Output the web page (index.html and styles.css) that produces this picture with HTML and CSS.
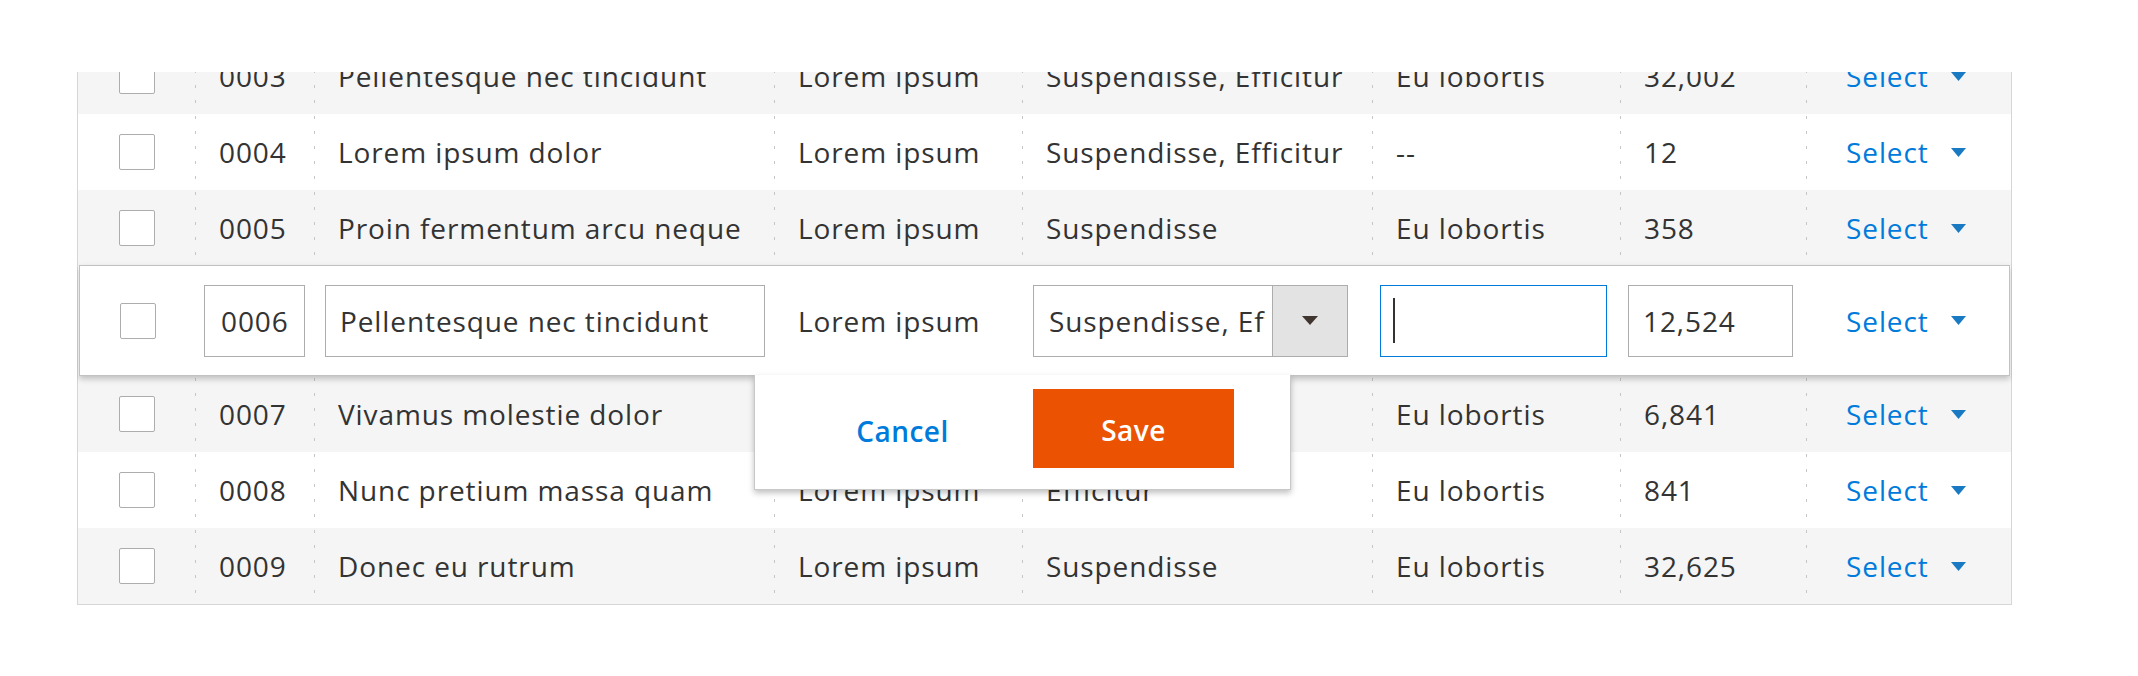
FILE: index.html
```html
<!DOCTYPE html>
<html lang="en">
<head>
<meta charset="utf-8">
<title>Inline edit grid</title>
<link rel="stylesheet" href="styles.css">
</head>
<body>
<div class="page">
  <div class="viewport">
    <div class="grid">
      <div class="row alt">
        <div class="cell check"><span class="checkbox"></span></div>
        <div class="cell">0003</div>
        <div class="cell">Pellentesque nec tincidunt</div>
        <div class="cell">Lorem ipsum</div>
        <div class="cell">Suspendisse, Efficitur</div>
        <div class="cell">Eu lobortis</div>
        <div class="cell">32,002</div>
        <div class="cell action">Select<svg class="tri" viewBox="0 0 15 9" width="15" height="9"><polygon points="0,0 15,0 7.5,9"/></svg></div>
      </div>
      <div class="row">
        <div class="cell check"><span class="checkbox"></span></div>
        <div class="cell">0004</div>
        <div class="cell">Lorem ipsum dolor</div>
        <div class="cell">Lorem ipsum</div>
        <div class="cell">Suspendisse, Efficitur</div>
        <div class="cell">--</div>
        <div class="cell">12</div>
        <div class="cell action">Select<svg class="tri" viewBox="0 0 15 9" width="15" height="9"><polygon points="0,0 15,0 7.5,9"/></svg></div>
      </div>
      <div class="row alt">
        <div class="cell check"><span class="checkbox"></span></div>
        <div class="cell">0005</div>
        <div class="cell">Proin fermentum arcu neque</div>
        <div class="cell">Lorem ipsum</div>
        <div class="cell">Suspendisse</div>
        <div class="cell">Eu lobortis</div>
        <div class="cell">358</div>
        <div class="cell action">Select<svg class="tri" viewBox="0 0 15 9" width="15" height="9"><polygon points="0,0 15,0 7.5,9"/></svg></div>
      </div>
      <div class="row edit">
        <div class="cell check"><span class="checkbox"></span></div>
        <div class="cell field-cell"><input class="field field-id" type="text" value="0006" readonly></div>
        <div class="cell field-cell"><input class="field field-title" type="text" value="Pellentesque nec tincidunt" readonly></div>
        <div class="cell">Lorem ipsum</div>
        <div class="cell field-cell">
          <div class="select">
            <span class="select-value">Suspendisse, Efficitur</span>
            <span class="select-btn"><svg viewBox="0 0 16 9" width="16" height="9"><polygon points="0,0 16,0 8,9"/></svg></span>
          </div>
        </div>
        <div class="cell field-cell"><div class="field field-focus"><span class="caret"></span></div></div>
        <div class="cell field-cell"><input class="field field-num" type="text" value="12,524" readonly></div>
        <div class="cell action">Select<svg class="tri" viewBox="0 0 15 9" width="15" height="9"><polygon points="0,0 15,0 7.5,9"/></svg></div>
        <div class="popup">
          <button class="btn-cancel" type="button">Cancel</button>
          <button class="btn-save" type="button">Save</button>
        </div>
      </div>
      <div class="row alt">
        <div class="cell check"><span class="checkbox"></span></div>
        <div class="cell">0007</div>
        <div class="cell">Vivamus molestie dolor</div>
        <div class="cell">Lorem ipsum</div>
        <div class="cell">Suspendisse</div>
        <div class="cell">Eu lobortis</div>
        <div class="cell">6,841</div>
        <div class="cell action">Select<svg class="tri" viewBox="0 0 15 9" width="15" height="9"><polygon points="0,0 15,0 7.5,9"/></svg></div>
      </div>
      <div class="row">
        <div class="cell check"><span class="checkbox"></span></div>
        <div class="cell">0008</div>
        <div class="cell">Nunc pretium massa quam</div>
        <div class="cell">Lorem ipsum</div>
        <div class="cell">Efficitur</div>
        <div class="cell">Eu lobortis</div>
        <div class="cell">841</div>
        <div class="cell action">Select<svg class="tri" viewBox="0 0 15 9" width="15" height="9"><polygon points="0,0 15,0 7.5,9"/></svg></div>
      </div>
      <div class="row alt">
        <div class="cell check"><span class="checkbox"></span></div>
        <div class="cell">0009</div>
        <div class="cell">Donec eu rutrum</div>
        <div class="cell">Lorem ipsum</div>
        <div class="cell">Suspendisse</div>
        <div class="cell">Eu lobortis</div>
        <div class="cell">32,625</div>
        <div class="cell action">Select<svg class="tri" viewBox="0 0 15 9" width="15" height="9"><polygon points="0,0 15,0 7.5,9"/></svg></div>
      </div>
    </div>
  </div>
</div>
</body>
</html>
```

FILE: styles.css
```css
* {
  box-sizing: border-box;
}

body {
  margin: 0;
  background: #ffffff;
  font-family: "Open Sans", "Noto Sans", sans-serif;
  font-size: 28px;
  letter-spacing: 0.9px;
  color: #333333;
}

.page {
  padding: 72px 0 0 77px;
}

.viewport {
  width: 1935px;
  height: 560px;
  overflow: hidden;
}

.grid {
  margin-top: -34px;
  border: 1px solid #d6d6d6;
  border-top: 0;
  position: relative;
}

.row {
  display: grid;
  grid-template-columns: 117px 119px 460px 248px 350px 248px 186px 1fr;
  height: 76px;
  background: #ffffff;
}

.row.alt {
  background: #f5f5f5;
}

.cell {
  height: 100%;
  display: flex;
  align-items: center;
  padding-left: 24px;
  white-space: nowrap;
  overflow: hidden;
}

.cell + .cell {
  background-image: repeating-linear-gradient(to bottom, #c6c6c6 0, #c6c6c6 3px, transparent 3px, transparent 15px);
  background-size: 1px 100%;
  background-repeat: no-repeat;
  background-position: 0 2px;
}

.cell.check {
  justify-content: center;
  padding: 0;
}

.checkbox {
  display: block;
  width: 36px;
  height: 36px;
  border: 1px solid #adadad;
  border-radius: 2px;
  background: #ffffff;
}

.cell.action {
  padding-left: 40px;
  color: #007bdb;
}

.tri {
  margin-left: 22px;
  fill: #1979c3;
  flex: none;
}

/* editable row */
.row.edit {
  position: relative;
  z-index: 2;
  height: 111px;
  margin: -1px 1px 0 1px;
  border: 1px solid #c2c2c2;
  background: #ffffff;
  box-shadow: 0 3px 6px rgba(0, 0, 0, 0.22);
  grid-template-columns: 115px 119px 460px 248px 350px 248px 186px 1fr;
  overflow: visible;
}

.row.edit .cell {
  background-image: none;
}

.row.edit .field-cell {
  padding-left: 0;
  overflow: visible;
}

.field {
  height: 72px;
  border: 1px solid #adadad;
  background: #ffffff;
  font-family: inherit;
  font-size: 28px;
  letter-spacing: 0.9px;
  color: #333333;
  padding: 0 14px;
  outline: none;
  border-radius: 0;
}

.field-id {
  width: 101px;
  margin-left: 9px;
  padding-left: 16px;
}

.field-title {
  width: 440px;
  margin-left: 11px;
}

.field-num {
  width: 165px;
  margin-left: 8px;
}

.field-focus {
  width: 227px;
  margin-left: 8px;
  border-color: #007bdb;
  display: flex;
  align-items: center;
  padding-left: 12px;
}

.caret {
  display: block;
  width: 2px;
  height: 45px;
  background: #333333;
}

.select {
  width: 315px;
  height: 72px;
  margin-left: 11px;
  border: 1px solid #adadad;
  background: #ffffff;
  display: flex;
}

.select-value {
  flex: 1;
  display: flex;
  align-items: center;
  padding: 0 0 0 15px;
  margin-right: 7px;
  overflow: hidden;
  white-space: nowrap;
}

.select-btn {
  width: 75px;
  flex: none;
  border-left: 1px solid #adadad;
  background: #e3e3e3;
  display: flex;
  align-items: center;
  justify-content: center;
  fill: #41362f;
}

/* actions popup under the editable row */
.popup {
  position: absolute;
  left: 674px;
  top: 100%;
  width: 537px;
  height: 115px;
  background: #ffffff;
  border: 1px solid #c8c8c8;
  border-top: 0;
  box-shadow: 0 3px 6px rgba(0, 0, 0, 0.25);
  display: flex;
  align-items: center;
  padding: 0 0 8px 0;
}

.btn-cancel {
  width: 278px;
  height: 79px;
  padding: 6px 0 0 17px;
  border: 0;
  background: transparent;
  font-family: inherit;
  font-size: 28px;
  font-weight: 600;
  letter-spacing: 0.5px;
  color: #007bdb;
  text-align: center;
  cursor: pointer;
}

.btn-save {
  width: 201px;
  height: 79px;
  padding: 4px 0 0 0;
  border: 0;
  background: #eb5202;
  font-family: inherit;
  font-size: 28px;
  font-weight: 600;
  letter-spacing: 0.5px;
  color: #ffffff;
  cursor: pointer;
}
```
